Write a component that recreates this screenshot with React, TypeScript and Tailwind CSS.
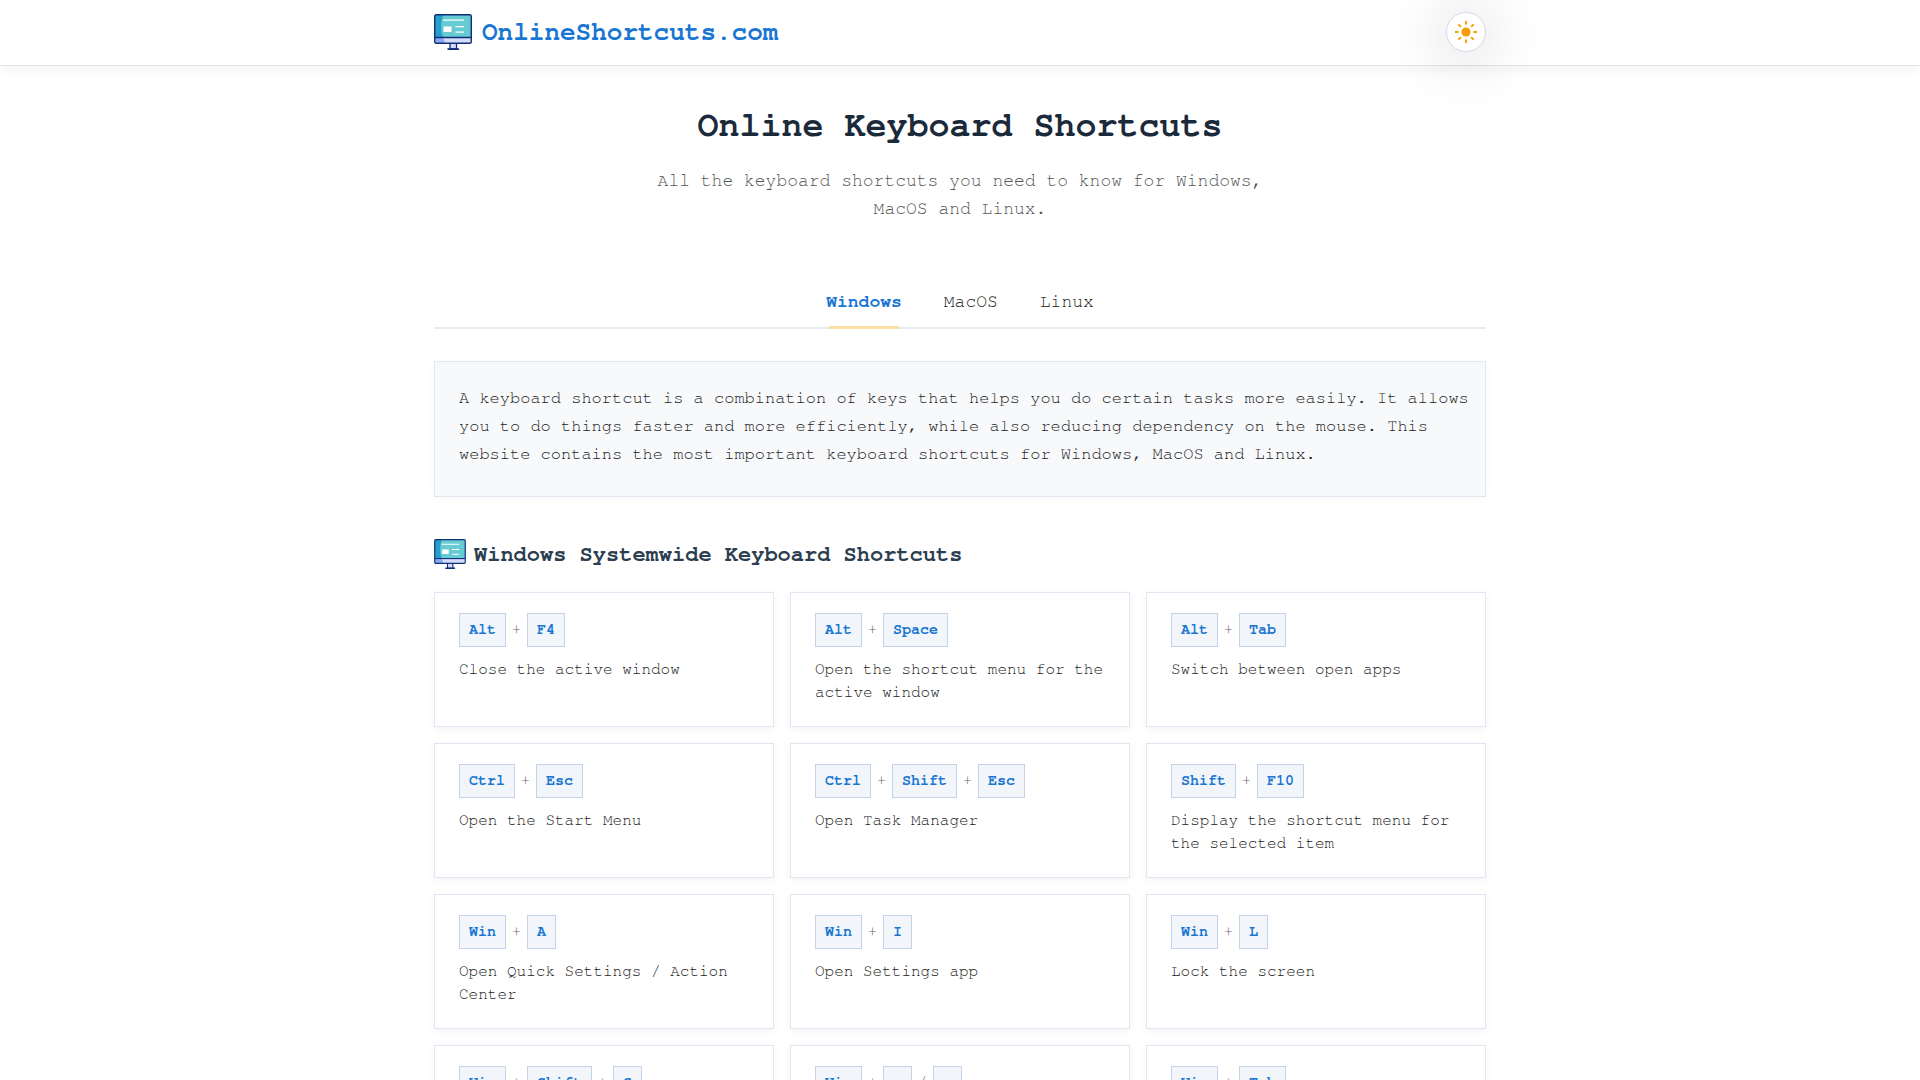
import React, { useState } from 'react';

type Platform = 'Windows' | 'MacOS' | 'Linux';

interface Shortcut {
  keys: string[];
  label: string;
  separators?: string[];
}

const PLATFORMS: Platform[] = ['Windows', 'MacOS', 'Linux'];

const SHORTCUTS: Shortcut[] = [
  { keys: ['Alt', 'F4'], label: 'Close the active window' },
  { keys: ['Alt', 'Space'], label: 'Open the shortcut menu for the active window' },
  { keys: ['Alt', 'Tab'], label: 'Switch between open apps' },
  { keys: ['Ctrl', 'Esc'], label: 'Open the Start Menu' },
  { keys: ['Ctrl', 'Shift', 'Esc'], label: 'Open Task Manager' },
  { keys: ['Shift', 'F10'], label: 'Display the shortcut menu for the selected item' },
  { keys: ['Win', 'A'], label: 'Open Quick Settings / Action Center' },
  { keys: ['Win', 'I'], label: 'Open Settings app' },
  { keys: ['Win', 'L'], label: 'Lock the screen' },
  { keys: ['Win', 'Shift', 'S'], label: 'Take a screenshot' },
  { keys: ['Win', '.', ','], separators: ['+', '/'], label: 'Open emoji panel' },
  { keys: ['Win', 'Tab'], label: 'Open Task View' },
];

const MonitorIcon: React.FC<{ className?: string }> = ({ className }) => (
  <svg viewBox="0 0 38 36" className={className} aria-hidden="true">
    <path d="M16 29h6.5v6H16z" fill="#d5dcfb" stroke="#0f2f7a" strokeWidth="1.3" />
    <path d="M14 35.100h10.500" stroke="#0f2f7a" strokeWidth="1.600" strokeLinecap="round" />
    <rect x="0.7" y="0.7" width="36.6" height="28.6" rx="1.5" fill="#d5dcfb" />
    <path d="M.7 23.500h8.500l2 5.800H2.200a1.500 1.500 0 0 1-1.500-1.500z" fill="#8fa9f0" />
    <path d="M2.200.7h33.600a1.500 1.500 0 0 1 1.500 1.500v21.300H.7V2.200A1.500 1.500 0 0 1 2.200.7z" fill="#66cbd3" />
    <path d="M2.200.7h7.300C6.500 7 6.500 17 9.200 23.500H.7V2.200A1.500 1.500 0 0 1 2.200.7z" fill="#269fcb" />
    <path d="M.7 23.500h36.600" stroke="#0f2f7a" strokeWidth="1.300" />
    <rect x="0.7" y="0.7" width="36.6" height="28.6" rx="1.5" fill="none" stroke="#0f2f7a" strokeWidth="1.4" />
    <path d="M9 6.200h21M21.500 12.600H30M21.500 18.200H30" stroke="#fff" strokeWidth="1.300" />
    <rect x="9.5" y="12.5" width="8" height="5.5" fill="#fff" />
  </svg>
);

const SunIcon: React.FC = () => (
  <svg viewBox="0 0 24 24" className="w-6 h-6" fill="none" stroke="#f59e0b" strokeWidth="2" aria-hidden="true">
    <circle cx="12" cy="12" r="4.6" fill="#f59e0b" stroke="none" />
    <path d="M12 1v3.600M12 19.400V23M1 12h3.600M19.400 12H23M4.400 4.400l2.400 2.400M17.200 17.200l2.400 2.400M4.400 19.600l2.400-2.400M17.200 6.800l2.400-2.400" />
  </svg>
);

const ShortcutCard: React.FC<{ shortcut: Shortcut }> = ({ shortcut }) => (
  <li className="border border-[#e1e7f2] bg-white px-6 pt-5 pb-[22px] shadow-[0_2px_8px_rgba(0,0,0,0.05)]">
    <div className="flex items-center gap-[6px] text-[15px]">
      {shortcut.keys.map((key, i) => (
        <React.Fragment key={key}>
          {i > 0 && <span className="text-[#666]">{shortcut.separators?.[i - 1] ?? '+'}</span>}
          <kbd className="border border-[#c5d3e8] bg-[#f2f6fb] px-[9px] font-[FreeMono,'Liberation_Mono',monospace] font-bold leading-8 text-[#1976d2]">{key}</kbd>
        </React.Fragment>
      ))}
    </div>
    <p className="mt-[11px] min-h-[46px] text-base leading-[23px] text-[#222]">{shortcut.label}</p>
  </li>
);

const App: React.FC = () => {
  const [platform, setPlatform] = useState<Platform>('Windows');

  return (
    <div className="min-h-screen bg-white font-[FreeMono,'Liberation_Mono',monospace]">
      <header className="relative border-b border-[#e1e5ee] bg-white shadow-[0_2px_12px_rgba(0,0,0,0.06)]">
        <div className="mx-auto flex h-[65px] max-w-[1100px] items-center justify-between px-6 pb-[2px]">
          <a href="#" className="flex items-center gap-[10px] text-[26px] font-bold leading-8 text-[#1976d2]">
            <MonitorIcon className="w-[38px] h-9" />
            OnlineShortcuts.com
          </a>
          <button
            type="button"
            aria-label="Toggle theme"
            className="flex h-10 w-10 items-center justify-center rounded-full border border-[#d3d9e6] bg-white shadow-[0_4px_60px_rgba(0,0,0,0.25)]"
          >
            <SunIcon />
          </button>
        </div>
      </header>

      <main className="mx-auto max-w-[1100px] px-6 pt-[39px] pb-12">
        <div className="text-center">
          <h1 className="text-[35px] font-bold leading-[42px] text-[#1a2a3a]">Online Keyboard Shortcuts</h1>
          <p className="mx-auto mt-5 max-w-[620px] text-lg leading-7 text-[#555]">
            All the keyboard shortcuts you need to know for Windows, MacOS and Linux.
          </p>
        </div>

        <nav className="mt-[65px] flex justify-center gap-[42px] border-b-2 border-[#e9ecef]">
          {PLATFORMS.map((name) => (
            <button
              key={name}
              type="button"
              onClick={() => setPlatform(name)}
              className={`relative pb-[11px] text-lg leading-7 ${name === platform ? 'font-bold text-[#1976d2]' : 'text-[#222]'}`}
            >
              {name}
              {name === platform && <span className="absolute inset-x-[3px] -bottom-[2px] h-[3px] bg-[#fcdfa3]" />}
            </button>
          ))}
        </nav>

        <p className="mt-8 border border-[#e1e8f2] bg-[#f8f9fb] pt-[22px] pr-4 pb-7 pl-6 text-[17px] leading-7 text-[#222] shadow-[0_2px_8px_rgba(0,0,0,0.03)]">
          A keyboard shortcut is a combination of keys that helps you do certain tasks more easily. It allows you to do
          things faster and more efficiently, while also reducing dependency on the mouse. This website contains the
          most important keyboard shortcuts for Windows, MacOS and Linux.
        </p>

        <section className="mt-[41px]">
          <h2 className="flex items-center gap-2 text-[22px] font-bold leading-8 text-[#2c3e50]">
            <MonitorIcon className="w-8 h-[30px]" />
            Windows Systemwide Keyboard Shortcuts
          </h2>
          <ul className="mt-[22px] grid grid-cols-3 gap-4">
            {SHORTCUTS.map((s) => (<ShortcutCard key={s.keys.join('+')} shortcut={s} />))}
          </ul>
        </section>
      </main>
    </div>
  );
};

export default App;
